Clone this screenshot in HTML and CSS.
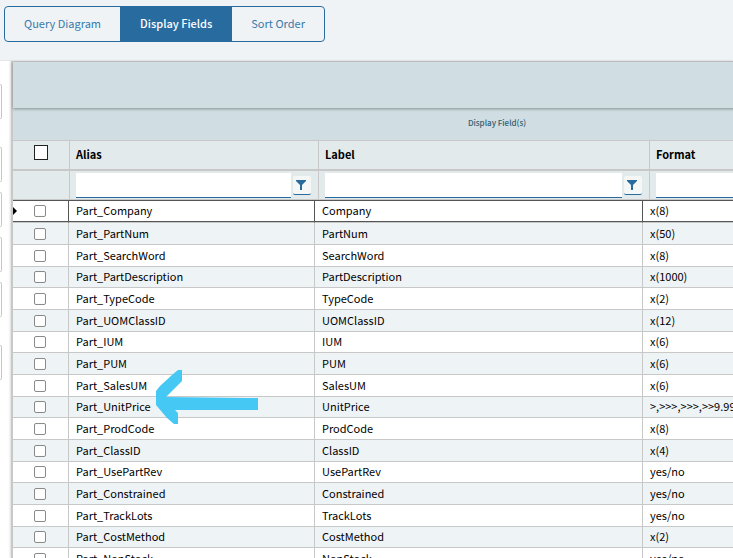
FILE: index.html
```html
<!DOCTYPE html>
<html lang="en">
<head>
    <meta charset="UTF-8">
    <meta name="viewport" content="width=device-width, initial-scale=1.0">
    <title>Display Fields</title>
    <link rel="stylesheet" href="styles.css">
</head>
<body>
    <header class="toolbar">
        <div class="tabs">
            <button class="tab" type="button">Query Diagram</button>
            <button class="tab active" type="button">Display Fields</button>
            <button class="tab" type="button">Sort Order</button>
        </div>
    </header>

    <div class="content">
        <div class="side">
            <button class="side-btn" type="button" aria-label="Add"></button>
            <button class="side-btn group" type="button" aria-label="Move right"></button>
            <button class="side-btn" type="button" aria-label="Move all right"></button>
            <button class="side-btn" type="button" aria-label="Move left"></button>
            <button class="side-btn" type="button" aria-label="Move all left"></button>
            <button class="side-btn group" type="button" aria-label="Remove"></button>
        </div>

        <main class="panel">
            <div class="grid">
                <div class="grid-bar"></div>
                <div class="grid-title">Display Field(s)</div>

                <table class="grid-head">
                    <colgroup><col class="head-check"><col class="head-alias"><col class="head-label"><col></colgroup>
                    <tr class="titles">
                        <th><input class="check-all" type="checkbox" aria-label="Select all"></th>
                        <th>Alias</th>
                        <th>Label</th>
                        <th>Format</th>
                    </tr>
                    <tr class="filters">
                        <td></td>
                        <td>
                            <div class="filter">
                                <input type="text" aria-label="Filter alias">
                                <button type="button" aria-label="Alias filter options"><svg width="12" height="12" viewBox="0 0 12 12"><path d="M1 1h10v1L7 6v5H5V6L1 2z" /></svg></button>
                            </div>
                        </td>
                        <td>
                            <div class="filter">
                                <input type="text" aria-label="Filter label">
                                <button type="button" aria-label="Label filter options"><svg width="12" height="12" viewBox="0 0 12 12"><path d="M1 1h10v1L7 6v5H5V6L1 2z" /></svg></button>
                            </div>
                        </td>
                        <td>
                            <div class="filter">
                                <input type="text" aria-label="Filter format">
                            </div>
                        </td>
                    </tr>
                </table>

                <table class="grid-body">
                    <colgroup><col class="body-check"><col class="body-alias"><col class="body-label"><col></colgroup>
                    <tbody>
                        <tr class="current"><td><input type="checkbox" aria-label="Part_Company"></td><td>Part_Company</td><td>Company</td><td>x(8)</td></tr>
                        <tr><td><input type="checkbox" aria-label="Part_PartNum"></td><td>Part_PartNum</td><td>PartNum</td><td>x(50)</td></tr>
                        <tr><td><input type="checkbox" aria-label="Part_SearchWord"></td><td>Part_SearchWord</td><td>SearchWord</td><td>x(8)</td></tr>
                        <tr><td><input type="checkbox" aria-label="Part_PartDescription"></td><td>Part_PartDescription</td><td>PartDescription</td><td>x(1000)</td></tr>
                        <tr><td><input type="checkbox" aria-label="Part_TypeCode"></td><td>Part_TypeCode</td><td>TypeCode</td><td>x(2)</td></tr>
                        <tr><td><input type="checkbox" aria-label="Part_UOMClassID"></td><td>Part_UOMClassID</td><td>UOMClassID</td><td>x(12)</td></tr>
                        <tr><td><input type="checkbox" aria-label="Part_IUM"></td><td>Part_IUM</td><td>IUM</td><td>x(6)</td></tr>
                        <tr><td><input type="checkbox" aria-label="Part_PUM"></td><td>Part_PUM</td><td>PUM</td><td>x(6)</td></tr>
                        <tr><td><input type="checkbox" aria-label="Part_SalesUM"></td><td>Part_SalesUM</td><td>SalesUM</td><td>x(6)</td></tr>
                        <tr><td><input type="checkbox" aria-label="Part_UnitPrice"></td><td>Part_UnitPrice</td><td>UnitPrice</td><td>&gt;,&gt;&gt;&gt;,&gt;&gt;&gt;,&gt;&gt;9.99</td></tr>
                        <tr><td><input type="checkbox" aria-label="Part_ProdCode"></td><td>Part_ProdCode</td><td>ProdCode</td><td>x(8)</td></tr>
                        <tr><td><input type="checkbox" aria-label="Part_ClassID"></td><td>Part_ClassID</td><td>ClassID</td><td>x(4)</td></tr>
                        <tr><td><input type="checkbox" aria-label="Part_UsePartRev"></td><td>Part_UsePartRev</td><td>UsePartRev</td><td>yes/no</td></tr>
                        <tr><td><input type="checkbox" aria-label="Part_Constrained"></td><td>Part_Constrained</td><td>Constrained</td><td>yes/no</td></tr>
                        <tr><td><input type="checkbox" aria-label="Part_TrackLots"></td><td>Part_TrackLots</td><td>TrackLots</td><td>yes/no</td></tr>
                        <tr><td><input type="checkbox" aria-label="Part_CostMethod"></td><td>Part_CostMethod</td><td>CostMethod</td><td>x(2)</td></tr>
                        <tr><td><input type="checkbox" aria-label="Part_NonStock"></td><td>Part_NonStock</td><td>NonStock</td><td>yes/no</td></tr>
                    </tbody>
                </table>
            </div>
        </main>
    </div>

    <svg class="arrow" width="104" height="56" viewBox="0 0 104 56">
        <path d="M23 0H27V11L22 16L11 27L90 28H103V40H20L23 43V54H19L12 48L1 35V21L5 16L17 5Z" />
    </svg>
</body>
</html>
```

FILE: styles.css
```css
* {
    margin: 0;
    padding: 0;
    box-sizing: border-box;
}

body {
    display: flex;
    flex-direction: column;
    height: 100vh;
    overflow: hidden;
    background: #fff;
    color: #000;
    font-family: "Noto Sans CJK SC", "Open Sans", sans-serif;
    font-size: 11px;
    line-height: 18px;
}

button,
input {
    font: inherit;
}

.toolbar {
    flex: none;
    padding: 6px 4px 18px;
    background: #eff3f6;
    border-bottom: 1px solid #e4e6e8;
}

.tabs {
    display: inline-flex;
    vertical-align: top;
    border: 1px solid #286c9f;
    border-radius: 4px;
    overflow: hidden;
}

.tab {
    height: 34px;
    padding: 0 19px 2px;
    border: none;
    background: none;
    color: #387aa9;
    cursor: pointer;
}

.tab.active {
    padding: 0 20px 2px;
    background: #286c9f;
    color: #fff;
    font-weight: 500;
}

.content {
    display: flex;
    flex: 1;
    min-height: 0;
}

/* right edge of the transfer buttons */
.side {
    flex: none;
    display: flex;
    flex-direction: column;
    gap: 10px;
    width: 11px;
    padding-top: 23px;
}

.side-btn {
    width: 2px;
    height: 35px;
    border: 1px solid #c4c7c9;
    border-left: none;
    border-radius: 0 2px 2px 0;
    background: #fff;
}

.side-btn.group {
    margin-top: 18px;
}

.panel {
    flex: 1;
    min-width: 0;
    overflow: hidden;
    box-shadow: -1px 0 2px #ddd;
}

.grid {
    min-width: 970px;
    border-left: 2px solid #c8c8c8;
    border-top: 1px solid #c8c8c8;
}

.grid-bar {
    position: relative;
    height: 46px;
    background: #d0dde2;
    box-shadow: 0 1px 3px rgba(0, 0, 0, 0.35);
}

.grid-title {
    height: 32px;
    background: #d0dde2;
    color: #2f6073;
    font-size: 8px;
    font-weight: 500;
    line-height: 29px;
    text-align: center;
}

table {
    width: 100%;
    table-layout: fixed;
    border-collapse: separate;
    border-spacing: 0;
}

.head-check { width: 57px; }
.head-alias { width: 249px; }
.head-label { width: 331px; }
.body-check { width: 56px; }
.body-alias { width: 246px; }
.body-label { width: 328px; }

.grid-head {
    background: #e2eaeb;
    border-bottom: 1px solid #c8c8c8;
}

.grid-head th {
    height: 31px;
    padding: 0 6px 2px;
    border-top: 1px solid #c8c8c8;
    border-right: 1px solid #c8c8c8;
    border-bottom: 2px solid #c8c8c8;
    font-weight: 700;
    text-align: left;
}

.grid-head th:first-child {
    padding: 0 0 5px;
}

.grid-head td {
    height: 28px;
    padding: 0 7px 0 6px;
    border-right: 1px solid #c8c8c8;
}

.filter {
    display: flex;
    align-items: center;
    gap: 2px;
}

.filter input {
    flex: 1;
    min-width: 0;
    height: 25px;
    padding: 0 4px;
    border: none;
    border-bottom: 1px solid #286c9f;
    background: #fff;
}

.filter button {
    display: flex;
    align-items: center;
    width: 18px;
    height: 19px;
    padding-left: 2px;
    border: none;
    border-bottom: 1px solid #286c9f;
    border-radius: 2px;
    background: #f5f6f6;
}

.filter svg {
    fill: #286c9f;
}

.grid-body td {
    height: 22px;
    padding: 0 7px 2px;
    border-right: 1px solid #c8c8c8;
    border-bottom: 1px solid #c8c8c8;
    white-space: nowrap;
}

.grid-body tr:nth-child(3n+1) td {
    height: 21px;
}

.grid-body tr:nth-child(even) td {
    background: #eef3f6;
}

.grid-body td:first-child {
    position: relative;
    padding: 0;
}

.grid-body tr.current td {
    height: 23px;
    border-right-color: #555;
    box-shadow: inset 0 1px #555, inset 0 -1px #555;
}

.current td:first-child::before {
    content: "";
    position: absolute;
    left: 0;
    top: 7px;
    border: 4px solid transparent;
    border-left-color: #000;
    border-right: none;
}

input[type="checkbox"] {
    appearance: none;
    display: block;
    width: 12px;
    height: 12px;
    margin-left: 21px;
    border: 1px solid #8a8a8a;
    border-radius: 2px;
    background: #fff;
}

input[type="checkbox"].check-all {
    width: 14px;
    height: 15px;
    border-color: #222;
    border-radius: 0;
}

/* pointer drawn over the grid */
.arrow {
    position: absolute;
    left: 155px;
    top: 370px;
    fill: #46c8f5;
}
```
